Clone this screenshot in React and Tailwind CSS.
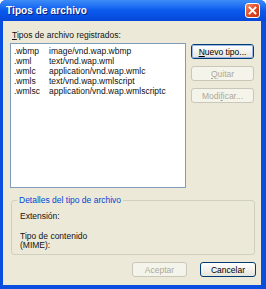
const rows = [
  ['.wbmp', 'image/vnd.wap.wbmp'],
  ['.wml', 'text/vnd.wap.wml'],
  ['.wmlc', 'application/vnd.wap.wmlc'],
  ['.wmls', 'text/vnd.wap.wmlscript'],
  ['.wmlsc', 'application/vnd.wap.wmlscriptc'],
]

function XPButton({ children, disabled, focused, className = '' }) {
  const base = disabled
    ? 'border-[#c9c7ba] text-[#aca899] bg-[#f5f4ea]'
    : 'border-[#003c74] text-black bg-gradient-to-b from-white to-[#e6e4da]'
  return (
    <div className={`h-[15px] flex items-center justify-center rounded-[3px] border ${base} ${className}`}>
      <div className={`w-full h-full flex items-center justify-center rounded-[2px] ${focused ? 'shadow-[inset_0_0_0_1px_#9cb6e8]' : ''}`}>
        {children}
      </div>
    </div>
  )
}

export default function App() {
  return (
    <div
      className="w-[266px] h-[289px] flex flex-col bg-[#0a4ee0] rounded-t-[6px] overflow-hidden text-[8.5px] leading-[10px] text-[#111]"
      style={{ fontFamily: '"Liberation Sans", Arial, sans-serif' }}
    >
      {/* Title bar */}
      <div className="h-[21px] flex items-center justify-between pl-[6px] pr-[6px] bg-gradient-to-b from-[#3d8cf7] via-[#0a5aee] to-[#0648d8]">
        <span className="text-white font-bold text-[10px] tracking-[0.1px] [text-shadow:1px_1px_0_#0a1e80]">Tipos de archivo</span>
        <div className="w-[15px] h-[15px] rounded-[3px] border border-white bg-gradient-to-br from-[#f08a68] via-[#e04a20] to-[#c43810] flex items-center justify-center">
          <svg width="9" height="9" viewBox="0 0 9 9">
            <path d="M1.5 1.5 L7.5 7.5 M7.5 1.5 L1.5 7.5" stroke="white" strokeWidth="1.8" strokeLinecap="square" />
          </svg>
        </div>
      </div>

      {/* Body */}
      <div className="flex-1 ml-[3px] mr-[5px] mb-[4px] bg-[#ece9d8] flex flex-col pt-[9px]">
        <div className="pl-[9px] h-[10px]">
          <span className="underline">T</span>ipos de archivo registrados:
        </div>

        <div className="flex mt-[3px] ml-[7px]">
          <div className="w-[176px] h-[145px] border border-[#7f9db9] bg-white pt-[2px] pl-[3px]">
            {rows.map(([ext, mime]) => (
              <div key={ext} className="flex h-[10px] items-center">
                <span className="w-[35px]">{ext}</span>
                <span>{mime}</span>
              </div>
            ))}
          </div>
          <div className="ml-[5px] mt-[1px] w-[63px] flex flex-col gap-[7px]">
            <XPButton focused>
              <span><span className="underline">N</span>uevo tipo...</span>
            </XPButton>
            <XPButton disabled>
              <span><span className="underline">Q</span>uitar</span>
            </XPButton>
            <XPButton disabled>
              <span>Modi<span className="underline">f</span>icar...</span>
            </XPButton>
          </div>
        </div>

        {/* Group box */}
        <div className="relative mt-[12px] ml-[8px] w-[244px] h-[55px] border border-[#d0d0bf] rounded-[3px]">
          <span className="absolute -top-[6px] left-[5px] px-[2px] bg-[#ece9d8] text-[#0046d5]">
            Detalles del tipo de archivo
          </span>
          <div className="pl-[8px] pt-[10px]">Extensión:</div>
          <div className="pl-[8px] mt-[11px] leading-[9px]">
            <div>Tipo de contenido</div>
            <div>(MIME):</div>
          </div>
        </div>

        <div className="flex justify-end gap-[13px] mt-[7px] mr-[5px]">
          <XPButton disabled className="w-[55px]">Aceptar</XPButton>
          <XPButton className="w-[56px]">Cancelar</XPButton>
        </div>
      </div>
    </div>
  )
}
